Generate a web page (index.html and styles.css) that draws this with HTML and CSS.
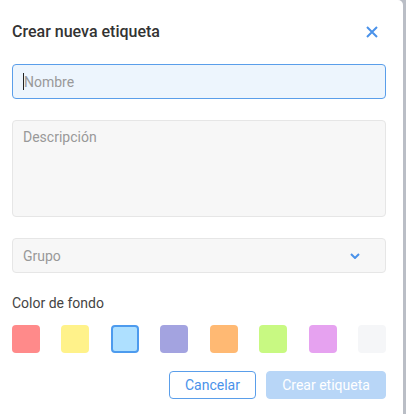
FILE: index.html
```html
<!DOCTYPE html>
<html lang="es">
<head>
<meta charset="utf-8">
<title>Crear nueva etiqueta</title>
<link rel="stylesheet" href="styles.css">
</head>
<body>
<div class="dialog">
  <div class="header">
    <h2 class="title">Crear nueva etiqueta</h2>
    <button class="close" aria-label="Cerrar">
      <svg width="12" height="12" viewBox="0 0 12 12"><path d="M1 1L11 11M11 1L1 11" stroke="#4a92ea" stroke-width="2" stroke-linecap="butt" fill="none"/></svg>
    </button>
  </div>
  <div class="field focused"><span class="caret"></span><span class="ph">Nombre</span></div>
  <div class="field area"><span class="ph">Descripción</span></div>
  <div class="field select"><span class="ph">Grupo</span>
    <svg class="chev" width="10" height="6" viewBox="0 0 10 6"><path d="M1 1L5 5L9 1" stroke="#4a92ea" stroke-width="2" fill="none"/></svg>
  </div>
  <div class="label">Color de fondo</div>
  <div class="swatches">
    <span class="sw c1"></span>
    <span class="sw c2"></span>
    <span class="sw c3 sel"></span>
    <span class="sw c4"></span>
    <span class="sw c5"></span>
    <span class="sw c6"></span>
    <span class="sw c7"></span>
    <span class="sw c8"></span>
  </div>
  <div class="actions">
    <button class="btn outline">Cancelar</button>
    <button class="btn primary">Crear etiqueta</button>
  </div>
</div>
</body>
</html>
```
FILE: styles.css
```css
html, body {
  margin: 0;
  padding: 0;
  height: 100%;
}
body {
  background: #babec6;
  font-family: Roboto, "Noto Sans", Arial, sans-serif;
  overflow: hidden;
}
.dialog {
  width: 403px;
  min-height: 100%;
  box-sizing: border-box;
  background: #fff;
  border-top-right-radius: 5px;
  padding: 20px 17px 0 12px;
}
.header {
  display: flex;
  align-items: center;
  justify-content: space-between;
  height: 24px;
  margin-bottom: 20px;
}
.title {
  margin: 0;
  font-size: 16px;
  font-weight: 500;
  color: #333;
  line-height: 24px;
}
.close {
  border: 0;
  background: none;
  padding: 0;
  margin-right: 8px;
  width: 12px;
  height: 12px;
  display: flex;
}
.field {
  box-sizing: border-box;
  height: 35px;
  border: 1px solid #e6e6e6;
  background: #f7f7f7;
  border-radius: 4px;
  padding: 0 10px;
  display: flex;
  align-items: center;
  margin-bottom: 21px;
  font-size: 14px;
}
.ph {
  color: #999;
}
.focused {
  background: #edf5fd;
  border-color: #5a9eea;
}
.caret {
  width: 1px;
  height: 17px;
  background: #222;
}
.area {
  height: 97px;
  align-items: flex-start;
  padding-top: 8px;
}
.select {
  justify-content: space-between;
  padding-right: 25px;
  margin-bottom: 20px;
}
.label {
  font-size: 14px;
  color: #444;
  line-height: 20px;
  margin-bottom: 12px;
}
.swatches {
  display: flex;
  justify-content: space-between;
  margin-bottom: 18px;
}
.sw {
  width: 28px;
  height: 28px;
  border-radius: 4px;
  box-sizing: border-box;
}
.c1 { background: #ff8a8a; }
.c2 { background: #fff28a; }
.c3 { background: #aee0ff; }
.c4 { background: #a3a3e0; }
.c5 { background: #ffb973; }
.c6 { background: #c8f982; }
.c7 { background: #e6a2f0; }
.c8 { background: #f5f6f8; }
.sel { border: 2px solid #4d9bee; }
.actions {
  display: flex;
  justify-content: flex-end;
  gap: 10px;
}
.btn {
  font-family: Roboto, "Noto Sans", Arial, sans-serif;
  font-size: 14px;
  height: 28px;
  border-radius: 4px;
  padding: 0;
  box-sizing: border-box;
}
.outline {
  width: 87px;
  background: #fff;
  border: 1px solid #5a9eea;
  color: #4a92ea;
}
.primary {
  width: 120px;
  background: #b8d6f7;
  border: 1px solid #b8d6f7;
  color: #fff;
}
```
